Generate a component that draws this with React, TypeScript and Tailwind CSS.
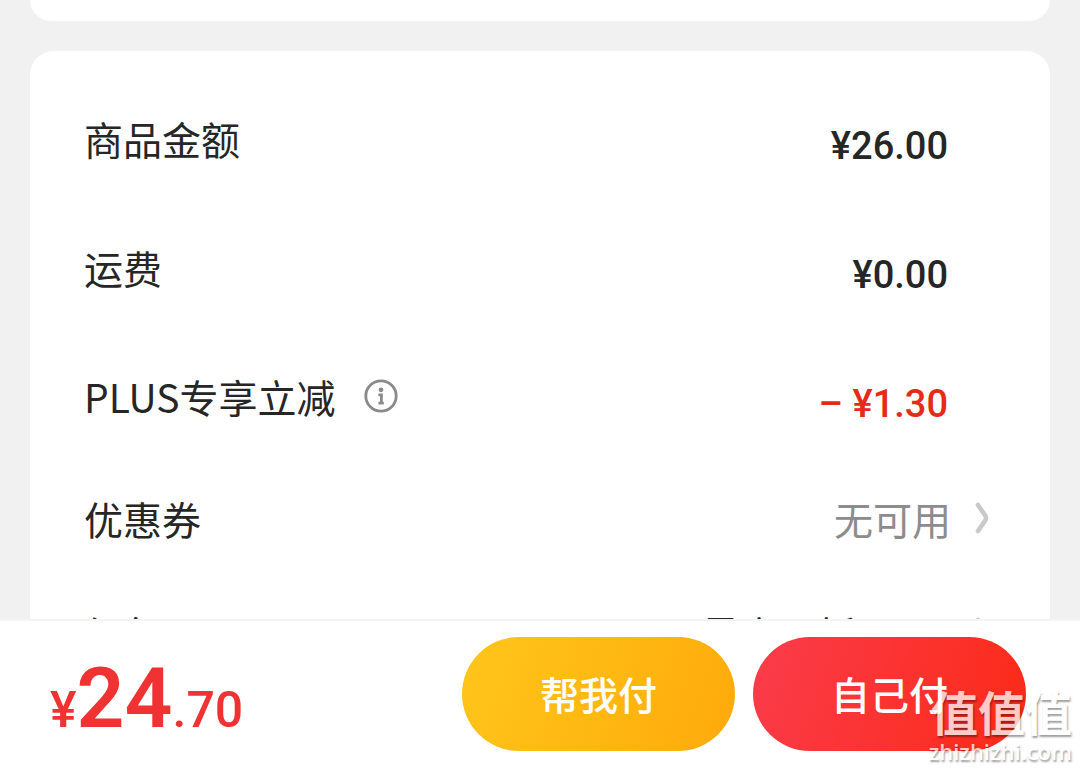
import type { ReactNode } from "react";

const Chevron = () => (
  <svg width="14" height="32" viewBox="0 0 14 32" fill="none" aria-hidden="true">
    <path
      d="M3 3 L10.5 14 Q11.5 16 10.5 18 L3 29"
      stroke="#c9c9c9"
      strokeWidth="4.6"
      strokeLinecap="round"
      strokeLinejoin="round"
    />
  </svg>
);

const InfoIcon = () => (
  <svg width="34" height="34" viewBox="0 0 34 34" fill="none" aria-hidden="true">
    <circle cx="17" cy="17" r="15.2" stroke="#8a8a8a" strokeWidth="2.8" />
    <circle cx="17" cy="10.8" r="2.4" fill="#8a8a8a" />
    <path d="M14.4 15.8 H17.4 V24.4 M14.4 24.2 H19.8" stroke="#8a8a8a" strokeWidth="2.8" />
  </svg>
);

type AmountRowProps = {
  label: string;
  children: ReactNode;
  info?: boolean;
  discount?: boolean;
};

const AmountRow = ({ label, children, info, discount }: AmountRowProps) => (
  <div className="flex h-[129px] items-center justify-between pr-[102px]">
    <div className="flex items-center gap-7">
      <span>{label}</span>
      {info && (
        <button type="button" aria-label={label} className="cursor-pointer">
          <InfoIcon />
        </button>
      )}
    </div>
    <span
      className={
        discount
          ? "pt-4 font-[Roboto,sans-serif] text-[38px] font-medium text-[#e52b17]"
          : "pt-4 font-[Roboto,sans-serif] text-[38px] font-medium"
      }
    >
      {children}
    </span>
  </div>
);

const App = () => {
  return (
    <div className="relative flex h-screen flex-col overflow-hidden bg-[#f1f1f1] font-['Noto_Sans_CJK_SC',sans-serif] text-[39px] leading-[56px] text-[#262626]">
      {/* Order details */}
      <main className="flex min-h-0 flex-1 flex-col gap-[30px] overflow-hidden px-[30px]">
        <section className="h-[21px] shrink-0 rounded-b-3xl bg-white" />

        <section className="shrink-0 rounded-3xl bg-white pt-[22px] pl-[54px]">
          <AmountRow label="商品金额">¥26.00</AmountRow>
          <AmountRow label="运费">¥0.00</AmountRow>
          <AmountRow label="PLUS专享立减" info discount>
            – ¥1.30
          </AmountRow>

          <a href="#coupon" className="flex h-[115px] items-center justify-between pr-[61px]">
            <span>优惠券</span>
            <span className="flex items-center gap-6 text-[#8c8c8c]">
              无可用
              <Chevron />
            </span>
          </a>
          <a href="#redpacket" className="flex h-[116px] items-center justify-between pr-[61px]">
            <span>红包</span>
            <span className="flex items-center gap-[118px]">
              最高可抵
              <Chevron />
            </span>
          </a>
        </section>
      </main>

      {/* Pay bar */}
      <footer className="flex shrink-0 items-center justify-between border-t-2 border-[#f4f4f4] bg-white pt-4 pr-[54px] pb-[18px] pl-[50px]">
        <p className="pt-5 font-[Roboto,sans-serif] text-[50px] leading-[80px] font-medium text-[#f03232]">
          ¥<span className="text-[84px] font-semibold">24</span>.70
        </p>
        <div className="flex gap-[18px]">
          <button
            type="button"
            className="h-[114px] w-[273px] cursor-pointer rounded-full bg-linear-[110deg] from-[#ffc61a] to-[#ffaa0a] pb-0.5 font-medium text-white"
          >
            帮我付
          </button>
          <button
            type="button"
            className="h-[114px] w-[273px] cursor-pointer rounded-full bg-linear-[110deg] from-[#fa3c4c] to-[#fc2a16] pb-0.5 font-medium text-white"
          >
            自己付
          </button>
        </div>
      </footer>

      {/* Site mark over the corner */}
      <div className="pointer-events-none absolute right-2 bottom-1 flex flex-col items-end text-white opacity-75 [text-shadow:1px_2px_2px_rgb(0_0_0/0.5)]">
        <span className="text-[47px] leading-[52px] font-bold">值值值</span>
        <span className="font-['Open_Sans',sans-serif] text-[22px] leading-[28px] font-semibold">zhizhizhi.com</span>
      </div>
    </div>
  );
};

export default App;
